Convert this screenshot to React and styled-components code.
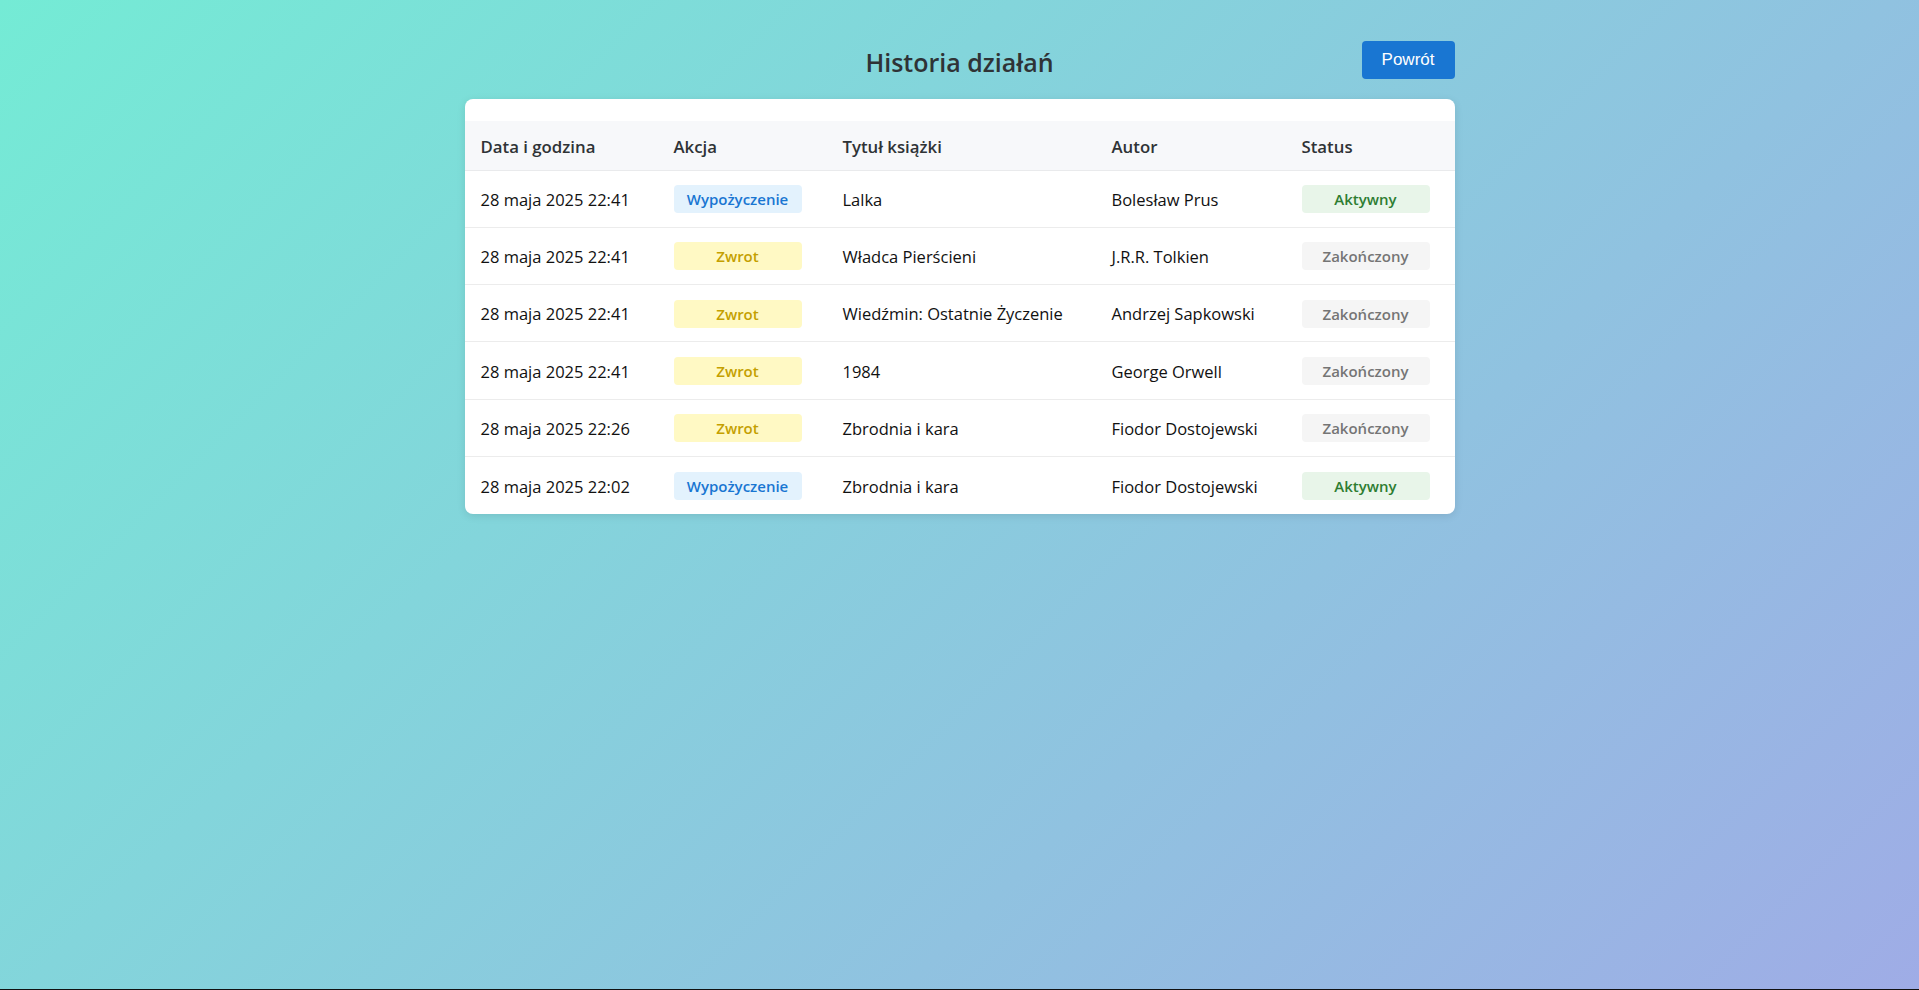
import React from "react";
import styled, { createGlobalStyle } from "styled-components";

const history = [
  { date: "28 maja 2025 22:41", action: "loan", title: "Lalka", author: "Bolesław Prus", status: "active" },
  { date: "28 maja 2025 22:41", action: "return", title: "Władca Pierścieni", author: "J.R.R. Tolkien", status: "done" },
  { date: "28 maja 2025 22:41", action: "return", title: "Wiedźmin: Ostatnie Życzenie", author: "Andrzej Sapkowski", status: "done" },
  { date: "28 maja 2025 22:41", action: "return", title: "1984", author: "George Orwell", status: "done" },
  { date: "28 maja 2025 22:26", action: "return", title: "Zbrodnia i kara", author: "Fiodor Dostojewski", status: "done" },
  { date: "28 maja 2025 22:02", action: "loan", title: "Zbrodnia i kara", author: "Fiodor Dostojewski", status: "active" },
];

const badgeColors = {
  loan: { bg: "#e3f2fd", fg: "#1976d2", label: "Wypożyczenie" },
  return: { bg: "#fff9c4", fg: "#c4a000", label: "Zwrot" },
  active: { bg: "#e8f5e9", fg: "#2e7d32", label: "Aktywny" },
  done: { bg: "#f5f5f5", fg: "#757575", label: "Zakończony" },
};

const GlobalStyle = createGlobalStyle`
  html {
    background: #111;
  }
  body {
    margin: 0;
    font-family: "Segoe UI", "Open Sans", "Noto Sans", sans-serif;
  }
`;

const Page = () => {
  return (
    <>
      <GlobalStyle />
      <Wrapper>
        <Container>
          <Header>
            <span />
            <Title>Historia działań</Title>
            <BackBtn>Powrót</BackBtn>
          </Header>
          <Card>
            <Table>
              <thead>
                <tr>
                  <Th $w={193}>Data i godzina</Th>
                  <Th $w={169}>Akcja</Th>
                  <Th $w={269}>Tytuł książki</Th>
                  <Th $w={190}>Autor</Th>
                  <Th $w={169}>Status</Th>
                </tr>
              </thead>
              <tbody>
                {history.map((row, i) => (
                  <Row key={i}>
                    <Td>{row.date}</Td>
                    <Td>
                      <Badge $kind={row.action}>{badgeColors[row.action].label}</Badge>
                    </Td>
                    <Td>{row.title}</Td>
                    <Td>{row.author}</Td>
                    <Td>
                      <Badge $kind={row.status}>{badgeColors[row.status].label}</Badge>
                    </Td>
                  </Row>
                ))}
              </tbody>
            </Table>
          </Card>
        </Container>
      </Wrapper>
    </>
  );
};

const Wrapper = styled.div`
  min-height: calc(100vh - 1px);
  background: linear-gradient(135deg, #74ebd5 0%, #9face6 100%);
  padding-top: 40px;
  box-sizing: border-box;
`;

const Container = styled.div`
  width: 990px;
  margin: 0 auto;
`;

const Header = styled.div`
  display: grid;
  grid-template-columns: 1fr auto 1fr;
  align-items: center;
  height: 38px;
  margin-bottom: 21px;
`;

const Title = styled.h2`
  margin: 0;
  padding-top: 5px;
  font-size: 25px;
  font-weight: 600;
  color: #2f3336;
`;

const BackBtn = styled.button`
  justify-self: end;
  height: 38px;
  padding: 0 20px;
  border: none;
  border-radius: 4px;
  background: #1976d2;
  color: #fff;
  font-family: "Liberation Sans", Arial, sans-serif;
  font-size: 17px;
  cursor: pointer;
`;

const Card = styled.div`
  background: #fff;
  border-radius: 8px;
  padding-top: 22px;
  overflow: hidden;
  box-shadow: 0 2px 8px rgba(0, 0, 0, 0.1);
`;

const Table = styled.table`
  width: 100%;
  border-collapse: collapse;
  table-layout: fixed;
`;

const Th = styled.th`
  width: ${(props) => props.$w}px;
  height: 49px;
  padding: 3px 16px 0;
  box-sizing: border-box;
  background: #f7f8fa;
  border-bottom: 1px solid #e9eaec;
  text-align: left;
  font-size: 16.8px;
  font-weight: 600;
  color: #2f3336;
`;

const Row = styled.tr`
  &:not(:last-child) td {
    border-bottom: 1px solid #ececec;
  }
`;

const Td = styled.td`
  height: 57.33px;
  padding: 1px 16px 0;
  box-sizing: border-box;
  font-size: 16.5px;
  color: #111;
  vertical-align: middle;
  white-space: nowrap;
`;

const Badge = styled.span`
  display: inline-block;
  width: 128px;
  padding: 4px 0;
  border-radius: 4px;
  text-align: center;
  font-size: 15px;
  font-weight: 600;
  background: ${(props) => badgeColors[props.$kind].bg};
  color: ${(props) => badgeColors[props.$kind].fg};
`;

export default Page;
